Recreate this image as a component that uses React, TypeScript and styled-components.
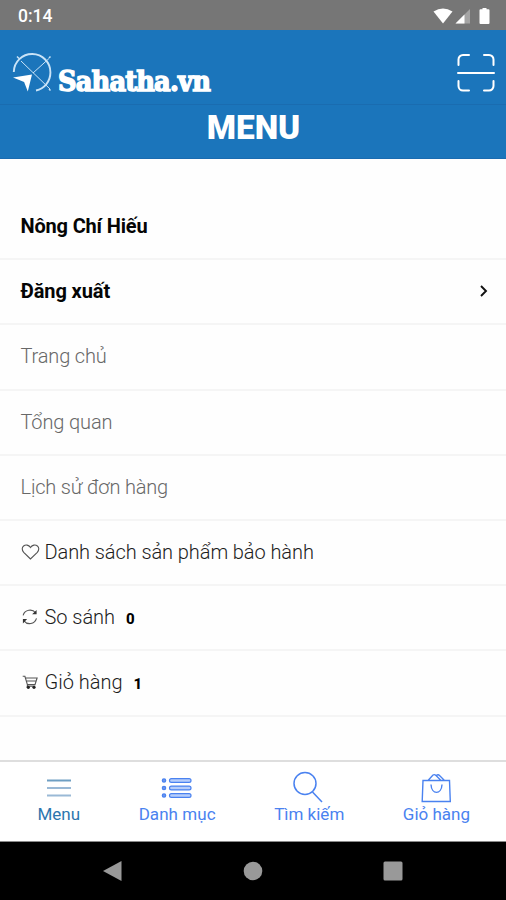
import React from "react";
import styled, { createGlobalStyle } from "styled-components";

const GlobalStyle = createGlobalStyle`
  * { box-sizing: border-box; }
  html, body { margin: 0; padding: 0; }
  body { font-family: Roboto, "Noto Sans", sans-serif; background: #fff; overflow: hidden; }
`;

const Screen = styled.div`
  width: 506px;
  height: 900px;
  display: flex;
  flex-direction: column;
  background: #fefefe;
`;

const StatusBar = styled.div`
  height: 30px;
  flex: none;
  display: flex;
  align-items: center;
  justify-content: space-between;
  padding: 2px 16px 0 18px;
  background: #767676;
  color: #fff;
  font-size: 17.5px;
  font-weight: 500;
`;

const StatusIcons = styled.svg`
  display: block;
  width: 58px;
  height: 18px;
`;

const Header = styled.header`
  height: 129px;
  flex: none;
  background: #1b75bb;
  color: #fff;
  border-bottom: 1px solid #1a6bb0;
`;

const BrandRow = styled.div`
  height: 75px;
  display: flex;
  align-items: flex-start;
  padding: 22px 11px 0 12px;
  border-bottom: 1px solid #1a6cb0;
`;

const Compass = styled.svg`
  width: 42px;
  height: 42px;
  margin-top: 1px;
  flex: none;
`;

const BrandName = styled.span`
  margin: 11px 0 0 4px;
  font-family: "DejaVu Serif Condensed", "DejaVu Serif", serif;
  font-stretch: condensed;
  font-weight: 700;
  font-size: 28.5px;
  line-height: 36px;
  letter-spacing: -0.8px;
  -webkit-text-stroke: 1.4px #fff;
  white-space: nowrap;
`;

const ScanIcon = styled.svg`
  width: 38px;
  height: 39px;
  margin: 1px 0 0 auto;
`;

const Title = styled.h1`
  margin: 0;
  padding: 1px 0 0 1px;
  text-align: center;
  font-size: 33.4px;
  line-height: 44px;
  font-weight: 900;
`;

const List = styled.ul`
  flex: 1;
  margin: 0;
  padding: 36px 0 0;
  list-style: none;
`;

const Row = styled.li<{ $tone: "strong" | "muted" | "normal" }>`
  height: 65.2px;
  display: flex;
  align-items: center;
  padding: 0 16px ${(p) => (p.$tone === "strong" ? 2 : 1)}px 20.5px;
  border-bottom: 2px solid #f5f5f5;
  font-size: 20px;
  white-space: nowrap;
  color: ${(p) => (p.$tone === "strong" ? "#050505" : p.$tone === "muted" ? "#686868" : "#1c1c1c")};
  font-weight: ${(p) => (p.$tone === "strong" ? 700 : 300)};
`;

const Label = styled.span<{ $track: number }>`
  letter-spacing: ${(p) => p.$track}px;
`;

const RowIcon = styled.svg`
  width: 19px;
  height: 18px;
  margin-right: 5px;
  flex: none;
  fill: none;
  stroke: #555;
  stroke-width: 1.1;
`;

const Chevron = styled.svg`
  width: 12px;
  height: 14px;
  margin-left: auto;
`;

const Count = styled.b`
  margin: 3px 0 0 11px;
  font-size: 15px;
  font-weight: 800;
  color: #000;
`;

const TabBar = styled.nav`
  height: 82px;
  flex: none;
  display: flex;
  justify-content: space-between;
  padding: 8px 36px 0 37.5px;
  border-top: 2px solid #dedede;
  border-bottom: 1px solid #8a8a8a;
  background: #fff;
`;

const Tab = styled.a<{ $active?: boolean }>`
  display: flex;
  flex-direction: column;
  align-items: center;
  color: ${(p) => (p.$active ? "#2d76ae" : "#4a82f0")};
`;

const TabIcon = styled.svg`
  width: 34px;
  height: 34px;
  fill: none;
  stroke: currentColor;
`;

const TabLabel = styled.span<{ $track: number }>`
  font-size: 17px;
  line-height: 20px;
  font-weight: 400;
  white-space: nowrap;
  letter-spacing: ${(p) => p.$track}px;
`;

const SystemNav = styled.div`
  height: 58px;
  flex: none;
  display: flex;
  justify-content: space-between;
  align-items: center;
  padding: 0 103px 0 102px;
  background: #000;
`;

const NavIcon = styled.svg`
  width: 20px;
  height: 22px;
  fill: #999;
`;

const HeartGlyph = () => (
  <RowIcon viewBox="0 0 19 18">
    <path d="M9.5 16 2.7 9.4C.6 7 .9 4.4 2.6 3c2-1.6 5-1.2 6.9 1.5C11.400 1.800 14.400 1.400 16.400 3c1.700 1.400 2 4-.1 6.400z" />
  </RowIcon>
);

const RefreshGlyph = () => (
  <RowIcon viewBox="0.7 0 19 18">
    <path d="M2.800 7.300C4.500 1.500 12 .5 15.300 4.800M16.200 10.400C14.300 16.500 7 17.200 3.700 12.800" />
    <path d="M16.300 2v4.300h-4.500zM2.600 15.600v-4.500h4.200z" fill="#333" stroke="none" />
  </RowIcon>
);

const CartGlyph = () => (
  <RowIcon viewBox="0.3 0 19 18">
    <path d="M2 3.300h2.200l2.500 8.300h7.600L16.400 5H5.200M5.800 8h9.300M7 11.600l-.5 1.700h8" />
    <circle cx="7.600" cy="14.300" r="1.600" fill="#222" stroke="none" />
    <circle cx="13.300" cy="14.300" r="1.600" fill="#222" stroke="none" />
  </RowIcon>
);

export default function App() {
  return (
    <>
      <GlobalStyle />
      <Screen>
        <StatusBar>
          <span>0:14</span>
          <StatusIcons viewBox="0 0 58 18">
            <path d="M1.500 4.500Q11 -1.500 20.500 4.500L11 16.500z" fill="#fff" />
            <path d="M38 2v14.500H23.500z" fill="#a4a4a4" />
            <path d="M32.500 7.500v9h-9z" fill="#fff" />
            <path d="M48.500 2.200h2V1h4v1.200h2q1 0 1 1V16q0 1-1 1h-8q-1 0-1-1V3.200q0-1 1-1z" fill="#fff" />
          </StatusIcons>
        </StatusBar>
        <Header>
          <BrandRow>
            <Compass viewBox="0 0 42 42" fill="none" stroke="#c9e3f7">
              <path d="M1.800 19A18.300 18.300 0 0 1 38.400 19.500A18.300 18.300 0 0 1 24 37.500" strokeWidth="1.900" />
              <path d="M9 8l29 28M37 5.500L21 20" strokeWidth="1" />
              <path d="M5 3.500l2 2M37 5l1.500-1.500M37 36l1.500 1.500" strokeWidth="1.500" />
              <path d="M1 24.500l19-3-4.200 17-3.700-9.500z" fill="#fff" stroke="none" />
            </Compass>
            <BrandName>Sahatha.vn</BrandName>
            <ScanIcon viewBox="0 0 38 39" fill="none" stroke="#fff" strokeWidth="2" strokeLinecap="round">
              <path d="M1.500 12V6.500a4.500 4.500 0 0 1 4.500-4.500H12M27 2h5a4.500 4.500 0 0 1 4.500 4.500V12M36.500 28v5a4.500 4.500 0 0 1-4.500 4.500h-5M12 37.500H6A4.500 4.500 0 0 1 1.500 33v-5M1 20h36" />
            </ScanIcon>
          </BrandRow>
          <Title>MENU</Title>
        </Header>
        <List>
          <Row $tone="strong"><Label $track={-0.17}>Nông Chí Hiếu</Label></Row>
          <Row $tone="strong">
            <Label $track={-0.1}>Đăng xuất</Label>
            <Chevron viewBox="0 0 12 14" fill="none" stroke="#111" strokeWidth="1.900">
              <path d="M3 2l5 5-5 5" />
            </Chevron>
          </Row>
          <Row $tone="muted"><Label $track={-0.15}>Trang chủ</Label></Row>
          <Row $tone="muted"><Label $track={-0.12}>Tổng quan</Label></Row>
          <Row $tone="muted"><Label $track={-0.17}>Lịch sử đơn hàng</Label></Row>
          <Row $tone="normal"><HeartGlyph /><Label $track={-0.08}>Danh sách sản phẩm bảo hành</Label></Row>
          <Row $tone="normal"><RefreshGlyph /><Label $track={-0.05}>So sánh</Label><Count>0</Count></Row>
          <Row $tone="normal"><CartGlyph /><Label $track={0}>Giỏ hàng</Label><Count>1</Count></Row>
        </List>
        <TabBar>
          <Tab $active>
            <TabIcon viewBox="0 0 34 34" strokeWidth="2">
              <path d="M5 10.500h24" stroke="#6f9fc3" />
              <path d="M5 18h24M5 25.500h24" stroke="#9ab9d6" />
            </TabIcon>
            <TabLabel $track={0}>Menu</TabLabel>
          </Tab>
          <Tab>
            <TabIcon viewBox="0 0 34 34" strokeWidth="1.200">
              {[10.500, 18, 25.500].map((y) => (
                <g key={y}>
                  <circle cx="4" cy={y} r="1.700" fill="#6d97ee" />
                  <rect x="9.500" y={y - 1.900} width="21.500" height="3.800" rx="1.900" fill="#b7cefb" />
                </g>
              ))}
            </TabIcon>
            <TabLabel $track={0.05}>Danh mục</TabLabel>
          </Tab>
          <Tab>
            <TabIcon viewBox="0 0 34 34" strokeWidth="1.500">
              <circle cx="13" cy="13.500" r="11" />
              <path d="M20.500 22L30 32" />
            </TabIcon>
            <TabLabel $track={0}>Tìm kiếm</TabLabel>
          </Tab>
          <Tab>
            <TabIcon viewBox="0 0 34 34" strokeWidth="1.400">
              <path d="M4 10.500h26.500l.8 21H3.200zM9 10.500l5-5.500q1.500-1 3 .5l5 5M17 6q2-2 3.500-.5l5 5M12 14.500c.5 10.500 10.500 10.500 11 0" />
            </TabIcon>
            <TabLabel $track={0}>Giỏ hàng</TabLabel>
          </Tab>
        </TabBar>
        <SystemNav>
          <NavIcon viewBox="0 0 20 22"><path d="M19.500 1v20L1 11z" /></NavIcon>
          <NavIcon viewBox="0 0 20 22"><circle cx="10" cy="11" r="9.300" /></NavIcon>
          <NavIcon viewBox="0 0 20 22"><rect x=".5" y="1.500" width="19" height="19" rx="1.500" /></NavIcon>
        </SystemNav>
      </Screen>
    </>
  );
}
